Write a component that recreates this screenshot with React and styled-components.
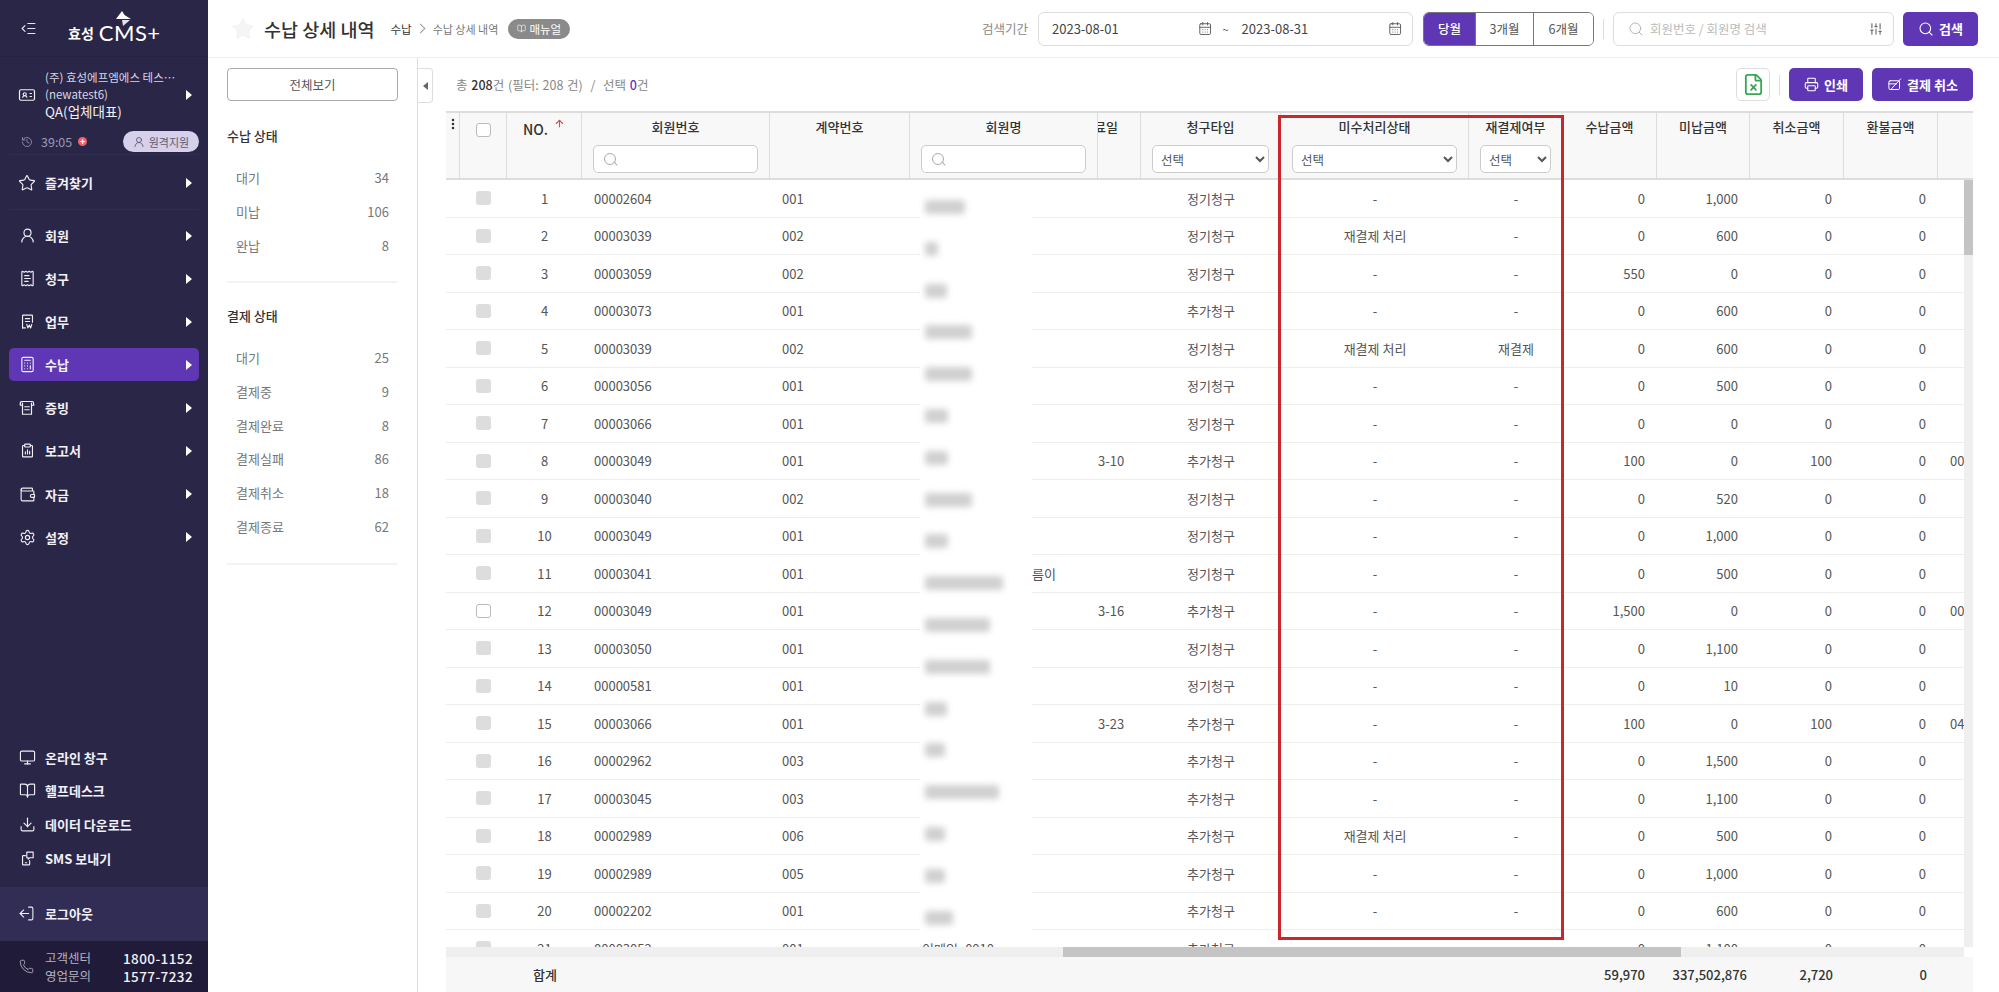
import styled, { createGlobalStyle } from "styled-components";
import {
    ArrowUp,
    BookOpen,
    Calculator,
    CalendarDays,
    Download,
    EllipsisVertical,
    FileX,
    History,
    IdCard,
    IndentDecrease,
    LogOut,
    Monitor,
    Phone,
    Printer,
    ReceiptText,
    Search,
    Settings,
    SlidersVertical,
    Star,
    UserRound,
    Wallet,
} from "lucide-react";

const COLUMNS = "14px 47px 75px 188px 140px 188px 43px 140px 188px 94px 94px 93px 94px 94px 1fr";

const LineIcon = ({ size = 17, children }) => (
    <svg
        width={size}
        height={size}
        viewBox="0 0 24 24"
        fill="none"
        stroke="currentColor"
        strokeWidth="1.6"
        strokeLinecap="round"
        strokeLinejoin="round"
    >
        {children}
    </svg>
);

const WorkIcon = () => (
    <LineIcon>
        <path d="M5 21V4a1 1 0 0 1 1-1h12a1 1 0 0 1 1 1v9" />
        <path d="M9 8h6M9 12h6" />
        <path d="M5 21h4M11 16l1.5 5 2-4 2 4 1.5-5" />
    </LineIcon>
);

const ProofIcon = () => (
    <LineIcon size={19}>
        <path d="M6 9H3c0-3 0-5 2-5h14c2 0 2 2 2 5h-3" />
        <path d="M6 6v15h12V6" />
        <path d="M9 11h6M9 15h6" />
    </LineIcon>
);

const ReportIcon = () => (
    <LineIcon>
        <path d="M8 5H6a1 1 0 0 0-1 1v14a1 1 0 0 0 1 1h12a1 1 0 0 0 1-1V6a1 1 0 0 0-1-1h-2" />
        <rect x="8" y="3" width="8" height="4" rx="1" />
        <path d="M9 17v-3M12 17v-6M15 17v-4" />
    </LineIcon>
);

const SmsIcon = () => (
    <LineIcon>
        <path d="M9 8H6a1 1 0 0 0-1 1v11a1 1 0 0 0 1 1h8a1 1 0 0 0 1-1v-5" />
        <path d="M11 3h9v8h-5l-2 2v-2h-2z" />
        <path d="M9 18h2" />
    </LineIcon>
);

const CancelIcon = () => (
    <LineIcon size={15}>
        <rect x="3" y="6" width="17" height="14" rx="2" />
        <path d="M22 3 6 20M3 11h12" />
    </LineIcon>
);

const MENU = [
    { label: "회원", Icon: () => <UserRound size={17} strokeWidth={1.6} /> },
    { label: "청구", Icon: () => <ReceiptText size={17} strokeWidth={1.6} /> },
    { label: "업무", Icon: WorkIcon },
    { label: "수납", Icon: () => <Calculator size={17} strokeWidth={1.6} />, active: true },
    { label: "증빙", Icon: ProofIcon },
    { label: "보고서", Icon: ReportIcon },
    { label: "자금", Icon: () => <Wallet size={17} strokeWidth={1.6} /> },
    { label: "설정", Icon: () => <Settings size={17} strokeWidth={1.6} /> },
];

const EXTRA_MENU = [
    { label: "온라인 창구", Icon: () => <Monitor size={17} strokeWidth={1.6} /> },
    { label: "헬프데스크", Icon: () => <BookOpen size={17} strokeWidth={1.6} /> },
    { label: "데이터 다운로드", Icon: () => <Download size={17} strokeWidth={1.6} /> },
    { label: "SMS 보내기", Icon: SmsIcon },
];

const PAY_STATUS = [["대기", 34], ["미납", 106], ["완납", 8]];
const SETTLE_STATUS = [["대기", 25], ["결제중", 9], ["결제완료", 8], ["결제실패", 86], ["결제취소", 18], ["결제종료", 62]];

// 회원번호, 계약번호, 이름, 일자, 청구타입, 미수, 재결제, 수납, 미납, 취소, 환불, 끝열
const ROWS = [
    ["00002604", "001", "", "", "정기청구", "-", "-", "0", "1,000", "0", "0", ""],
    ["00003039", "002", "", "", "정기청구", "재결제 처리", "-", "0", "600", "0", "0", ""],
    ["00003059", "002", "", "", "정기청구", "-", "-", "550", "0", "0", "0", ""],
    ["00003073", "001", "", "", "추가청구", "-", "-", "0", "600", "0", "0", ""],
    ["00003039", "002", "", "", "정기청구", "재결제 처리", "재결제", "0", "600", "0", "0", ""],
    ["00003056", "001", "", "", "정기청구", "-", "-", "0", "500", "0", "0", ""],
    ["00003066", "001", "", "", "정기청구", "-", "-", "0", "0", "0", "0", ""],
    ["00003049", "001", "", "3-10", "추가청구", "-", "-", "100", "0", "100", "0", "00"],
    ["00003040", "002", "", "", "정기청구", "-", "-", "0", "520", "0", "0", ""],
    ["00003049", "001", "", "", "정기청구", "-", "-", "0", "1,000", "0", "0", ""],
    ["00003041", "001", "름이", "", "정기청구", "-", "-", "0", "500", "0", "0", ""],
    ["00003049", "001", "", "3-16", "추가청구", "-", "-", "1,500", "0", "0", "0", "00"],
    ["00003050", "001", "", "", "정기청구", "-", "-", "0", "1,100", "0", "0", ""],
    ["00000581", "001", "", "", "정기청구", "-", "-", "0", "10", "0", "0", ""],
    ["00003066", "001", "", "3-23", "추가청구", "-", "-", "100", "0", "100", "0", "04"],
    ["00002962", "003", "", "", "추가청구", "-", "-", "0", "1,500", "0", "0", ""],
    ["00003045", "003", "", "", "추가청구", "-", "-", "0", "1,100", "0", "0", ""],
    ["00002989", "006", "", "", "추가청구", "재결제 처리", "-", "0", "500", "0", "0", ""],
    ["00002989", "005", "", "", "추가청구", "-", "-", "0", "1,000", "0", "0", ""],
    ["00002202", "001", "", "", "추가청구", "-", "-", "0", "600", "0", "0", ""],
    ["00003052", "001", "이메일_0010", "", "추가청구", "-", "-", "0", "1,100", "0", "0", ""],
];

const BLOBS = [40, 13, 22, 47, 47, 23, 23, 47, 23, 78, 65, 65, 22, 20, 74, 20, 20, 28];

const App = () => {
    return (
        <Page>
            <GlobalStyle />
            <Sidebar>
                <SideTop>
                    <IndentDecrease size={17} strokeWidth={1.6} />
                    <Logo>
                        <LogoMark viewBox="0 0 15 15">
                            <polygon points="6,0 0,8 15,8 8.5,4" fill="#fff" />
                            <polygon points="6,9 14,9 7,15" fill="#e4e2ee" />
                        </LogoMark>
                        <LogoKo>효성</LogoKo>
                        <LogoEn>CMS+</LogoEn>
                    </Logo>
                </SideTop>

                <Account>
                    <AccountMain>
                        <IdCard size={18} strokeWidth={1.6} />
                        <AccountText>
                            <AccountLine>(주) 효성에프엠에스 테스⋯</AccountLine>
                            <AccountLine>(newatest6)</AccountLine>
                            <AccountName>QA(업체대표)</AccountName>
                        </AccountText>
                        <Caret />
                    </AccountMain>
                    <Session>
                        <History size={12} strokeWidth={1.6} />
                        <Timer>39:05</Timer>
                        <PlusDot>+</PlusDot>
                        <RemotePill>
                            <UserRound size={12} strokeWidth={1.8} />
                            원격지원
                        </RemotePill>
                    </Session>
                </Account>

                <Favorites>
                    <MenuItem>
                        <Star size={18} strokeWidth={1.5} />
                        <MenuLabel>즐겨찾기</MenuLabel>
                        <Caret />
                    </MenuItem>
                </Favorites>

                <MenuList>
                    {MENU.map(({ label, Icon, active }) => (
                        <MenuItem key={label} $active={active}>
                            <IconSlot>
                                <Icon />
                            </IconSlot>
                            <MenuLabel>{label}</MenuLabel>
                            <Caret />
                        </MenuItem>
                    ))}
                </MenuList>

                <ExtraList>
                    {EXTRA_MENU.map(({ label, Icon }) => (
                        <ExtraItem key={label}>
                            <IconSlot>
                                <Icon />
                            </IconSlot>
                            <MenuLabel>{label}</MenuLabel>
                        </ExtraItem>
                    ))}
                </ExtraList>

                <Logout>
                    <FlipIcon>
                        <LogOut size={17} strokeWidth={1.5} />
                    </FlipIcon>
                    <MenuLabel>로그아웃</MenuLabel>
                </Logout>

                <Contact>
                    <Phone size={15} strokeWidth={1.4} />
                    <ContactNames>
                        <span>고객센터</span>
                        <span>영업문의</span>
                    </ContactNames>
                    <ContactNumbers>
                        <span>1800-1152</span>
                        <span>1577-7232</span>
                    </ContactNumbers>
                </Contact>
            </Sidebar>

            <Content>
                <TopBar>
                    <TitleGroup>
                        <Star size={24} color="#f3f3f3" fill="#f5f5f5" strokeWidth={1} />
                        <Title>수납 상세 내역</Title>
                        <Crumbs>
                            <CrumbStrong>수납</CrumbStrong>
                            <CrumbSep />
                            <span>수납 상세 내역</span>
                        </Crumbs>
                        <ManualPill>
                            <BookOpen size={9} strokeWidth={1.6} />
                            매뉴얼
                        </ManualPill>
                    </TitleGroup>

                    <SearchGroup>
                        <PeriodLabel>검색기간</PeriodLabel>
                        <DateField>
                            <DateValue>2023-08-01</DateValue>
                            <CalendarDays size={15} strokeWidth={1.5} />
                            <Tilde>~</Tilde>
                            <DateValue>2023-08-31</DateValue>
                            <CalendarDays size={15} strokeWidth={1.5} />
                        </DateField>
                        <Segments>
                            <Segment $on $w={52}>당월</Segment>
                            <Segment $w={58}>3개월</Segment>
                            <Segment $w={59}>6개월</Segment>
                        </Segments>
                        <VSep />
                        <SearchBox>
                            <Search size={16} strokeWidth={1.3} color="#aaaaaa" />
                            <SearchText>회원번호 / 회원명 검색</SearchText>
                            <SlidersVertical size={14} strokeWidth={1.7} color="#555555" />
                        </SearchBox>
                        <PurpleButton $w={75} $h={34}>
                            <Search size={16} strokeWidth={1.6} />
                            검색
                        </PurpleButton>
                    </SearchGroup>
                </TopBar>

                <Body>
                    <FilterPanel>
                        <ShowAll>전체보기</ShowAll>
                        <FilterGroup>
                            <FilterTitle>수납 상태</FilterTitle>
                            <FilterList>
                                {PAY_STATUS.map(([name, count]) => (
                                    <FilterRow key={name}>
                                        <span>{name}</span>
                                        <span>{count}</span>
                                    </FilterRow>
                                ))}
                            </FilterList>
                        </FilterGroup>
                        <FilterGroup>
                            <FilterTitle>결제 상태</FilterTitle>
                            <FilterList>
                                {SETTLE_STATUS.map(([name, count]) => (
                                    <FilterRow key={name}>
                                        <span>{name}</span>
                                        <span>{count}</span>
                                    </FilterRow>
                                ))}
                            </FilterList>
                        </FilterGroup>
                    </FilterPanel>

                    <Main>
                        <Toolbar>
                            <PanelToggle>
                                <SmallCaret />
                            </PanelToggle>
                            <Summary>
                                총 <b>208</b>건 (필터: 208 건) &nbsp;/&nbsp; 선택 <Accent>0</Accent>건
                            </Summary>
                            <ToolActions>
                                <ExcelButton>
                                    <FileX size={23} strokeWidth={1.9} color="#3aa655" />
                                </ExcelButton>
                                <VSep />
                                <PurpleButton $w={74} $h={33}>
                                    <Printer size={15} strokeWidth={1.7} />
                                    인쇄
                                </PurpleButton>
                                <PurpleButton $w={101} $h={33}>
                                    <CancelIcon />
                                    결제 취소
                                </PurpleButton>
                            </ToolActions>
                        </Toolbar>

                        <Table>
                            <HeadRow>
                                <HeadCell $first>
                                    <EllipsisVertical size={14} strokeWidth={2.4} color="#333" />
                                </HeadCell>
                                <HeadCell><Check $head /></HeadCell>
                                <HeadCell>
                                    <NoHead>
                                        NO.
                                        <ArrowUp size={11} strokeWidth={2.4} color="#e2474c" />
                                    </NoHead>
                                </HeadCell>
                                <HeadCell>
                                    회원번호
                                    <SearchInput />
                                </HeadCell>
                                <HeadCell>계약번호</HeadCell>
                                <HeadCell>
                                    회원명
                                    <SearchInput />
                                </HeadCell>
                                <HeadCell $clip>료일</HeadCell>
                                <HeadCell>
                                    청구타입
                                    <HeadSelect><option>선택</option></HeadSelect>
                                </HeadCell>
                                <HeadCell>
                                    미수처리상태
                                    <HeadSelect><option>선택</option></HeadSelect>
                                </HeadCell>
                                <HeadCell>
                                    재결제여부
                                    <HeadSelect><option>선택</option></HeadSelect>
                                </HeadCell>
                                <HeadCell>수납금액</HeadCell>
                                <HeadCell>미납금액</HeadCell>
                                <HeadCell>취소금액</HeadCell>
                                <HeadCell>환불금액</HeadCell>
                                <HeadCell $last />
                            </HeadRow>

                            <BodyWrap>
                                <ScrollArea>
                                    {ROWS.map((row, i) => (
                                        <Row key={i}>
                                            <Cell />
                                            <Cell $align="center"><Check $open={i === 11} /></Cell>
                                            <Cell $align="center">{i + 1}</Cell>
                                            <Cell>{row[0]}</Cell>
                                            <Cell>{row[1]}</Cell>
                                            <Cell $indent={row[2] === "름이" ? 110 : 0}>{row[2]}</Cell>
                                            <Cell $bare>{row[3]}</Cell>
                                            <Cell $align="center">{row[4]}</Cell>
                                            <Cell $align="center">{row[5]}</Cell>
                                            <Cell $align="center">{row[6]}</Cell>
                                            <Cell $align="right">{row[7]}</Cell>
                                            <Cell $align="right">{row[8]}</Cell>
                                            <Cell $align="right">{row[9]}</Cell>
                                            <Cell $align="right">{row[10]}</Cell>
                                            <Cell>{row[11]}</Cell>
                                        </Row>
                                    ))}
                                    <MaskPatch>
                                        {BLOBS.map((w, i) => (
                                            <Blob key={i} $w={w} />
                                        ))}
                                    </MaskPatch>
                                </ScrollArea>
                                <VTrack>
                                    <VThumb />
                                </VTrack>
                            </BodyWrap>

                            <HTrack>
                                <HThumb />
                            </HTrack>

                            <TotalRow>
                                <TotalLabel>합계</TotalLabel>
                                <TotalValue $x={1645}>59,970</TotalValue>
                                <TotalValue $x={1747}>337,502,876</TotalValue>
                                <TotalValue $x={1833}>2,720</TotalValue>
                                <TotalValue $x={1927}>0</TotalValue>
                            </TotalRow>
                        </Table>

                        <Highlight />
                    </Main>
                </Body>
            </Content>
        </Page>
    );
};

const GlobalStyle = createGlobalStyle`
    html, body {
        margin: 0;
        height: 100%;
        overflow: hidden;
        background: #fff;
    }
    body, button, input, select {
        font-family: "Noto Sans CJK KR", "Noto Sans", sans-serif;
    }
    * {
        box-sizing: border-box;
    }
`;

const Page = styled.div`
    display: flex;
    width: 1999px;
    height: 992px;
    overflow: hidden;
`;

const Sidebar = styled.aside`
    width: 208px;
    flex: none;
    height: 100%;
    display: flex;
    flex-direction: column;
    background: #2a2647;
    color: #f1f0f6;
`;

const SideTop = styled.div`
    height: 57px;
    padding-left: 20px;
    display: flex;
    align-items: center;
    flex: none;
    color: #e6e4ef;
    border-bottom: 1px solid #25213f;
`;

const Logo = styled.div`
    position: relative;
    margin-left: 31px;
    margin-top: 10px;
    display: flex;
    align-items: center;
    gap: 5px;
    color: #fff;
`;

const LogoMark = styled.svg`
    position: absolute;
    left: 48px;
    top: -12px;
    width: 15px;
    height: 15px;
`;

const LogoKo = styled.span`
    font-size: 14px;
    font-weight: 700;
`;

const LogoEn = styled.span`
    font-family: "Lato", sans-serif;
    font-size: 22px;
    line-height: 20px;
    letter-spacing: 0.5px;
`;

const Account = styled.div`
    height: 98px;
    margin: 0 9px;
    padding-top: 12px;
    border-bottom: 1px solid #312d50;
    flex: none;
`;

const AccountMain = styled.div`
    display: flex;
    align-items: center;
    padding-left: 9px;
    padding-right: 7px;
    gap: 9px;
`;

const AccountText = styled.div`
    flex: 1;
    min-width: 0;
    display: flex;
    flex-direction: column;
`;

const AccountLine = styled.span`
    font-size: 11.5px;
    line-height: 17px;
    white-space: nowrap;
    color: #d8d6e4;
`;

const AccountName = styled.span`
    font-size: 13.5px;
    line-height: 17px;
    white-space: nowrap;
    color: #f1f0f6;
`;

const Session = styled.div`
    display: flex;
    align-items: center;
    margin-top: 11px;
    padding-left: 12px;
    color: #9d9ab1;
`;

const Timer = styled.span`
    font-size: 12.5px;
    margin-left: 8px;
`;

const PlusDot = styled.span`
    width: 9px;
    height: 9px;
    margin-left: 6px;
    border-radius: 50%;
    background: #e8646a;
    color: #fff;
    font-size: 9px;
    line-height: 9px;
    text-align: center;
    font-weight: 700;
`;

const RemotePill = styled.span`
    margin-left: auto;
    width: 76px;
    height: 21px;
    border-radius: 11px;
    background: #d6d0ea;
    color: #5e5a73;
    font-size: 11px;
    display: flex;
    align-items: center;
    justify-content: center;
    gap: 4px;
`;

const Favorites = styled.div`
    height: 55px;
    margin: 0 9px;
    padding-top: 11px;
    border-bottom: 1px solid #312d50;
    flex: none;
`;

const MenuList = styled.nav`
    margin: 9px 9px 0;
    display: flex;
    flex-direction: column;
    gap: 10.1px;
`;

const MenuItem = styled.a`
    height: 33px;
    padding: 0 7px 0 9px;
    display: flex;
    align-items: center;
    gap: 9px;
    border-radius: 5px;
    background: ${(props) => (props.$active ? "#5f37b5" : "transparent")};
    color: #f1f0f6;
`;

const IconSlot = styled.span`
    width: 18px;
    flex: none;
    display: flex;
    justify-content: center;
`;

const MenuLabel = styled.span`
    flex: 1;
    font-size: 13px;
    font-weight: 700;
    white-space: nowrap;
`;

const Caret = styled.i`
    flex: none;
    width: 0;
    height: 0;
    border-left: 6px solid #fff;
    border-top: 5px solid transparent;
    border-bottom: 5px solid transparent;
`;

const ExtraList = styled.div`
    margin-top: auto;
    padding: 0 18px 12px;
    display: flex;
    flex-direction: column;
`;

const ExtraItem = styled.a`
    height: 33.7px;
    display: flex;
    align-items: center;
    gap: 9px;
    color: #f1f0f6;
`;

const Logout = styled.a`
    height: 54px;
    flex: none;
    padding: 0 0 2px 18px;
    display: flex;
    align-items: center;
    gap: 10px;
    background: #322d55;
    color: #f1f0f6;
`;

const FlipIcon = styled.span`
    display: flex;
    transform: scaleX(-1);
`;

const Contact = styled.div`
    height: 51px;
    flex: none;
    padding: 0 15px 0 19px;
    display: flex;
    align-items: center;
    background: #201b38;
    color: #b4b1c2;
`;

const ContactNames = styled.div`
    margin-left: 11px;
    display: flex;
    flex-direction: column;
    font-size: 12.5px;
    line-height: 18px;
`;

const ContactNumbers = styled.div`
    margin-left: auto;
    display: flex;
    flex-direction: column;
    color: #f1f0f6;
    font-size: 13.5px;
    line-height: 18px;
    font-weight: 500;
    letter-spacing: 0.4px;
`;

const Content = styled.div`
    flex: 1;
    min-width: 0;
    display: flex;
    flex-direction: column;
`;

const TopBar = styled.header`
    height: 58px;
    flex: none;
    padding: 0 21px 0 23px;
    display: flex;
    align-items: center;
    justify-content: space-between;
    border-bottom: 1px solid #eeeeee;
`;

const TitleGroup = styled.div`
    display: flex;
    align-items: center;
`;

const Title = styled.h1`
    margin: 0 0 0 9px;
    font-size: 18.5px;
    font-weight: 500;
    color: #333;
`;

const Crumbs = styled.div`
    margin-left: 16px;
    display: flex;
    align-items: center;
    font-size: 11px;
    color: #777;
`;

const CrumbStrong = styled.span`
    font-size: 11.5px;
    color: #333;
`;

const CrumbSep = styled.i`
    width: 7px;
    height: 7px;
    margin: 0 9px 0 5px;
    border-top: 1px solid #999;
    border-right: 1px solid #999;
    transform: rotate(45deg);
`;

const ManualPill = styled.span`
    margin-left: 10px;
    width: 62px;
    height: 20px;
    border-radius: 10px;
    background: #8a8a8a;
    color: #fff;
    font-size: 11.5px;
    display: flex;
    align-items: center;
    justify-content: center;
    gap: 3px;
`;

const SearchGroup = styled.div`
    display: flex;
    align-items: center;
`;

const PeriodLabel = styled.span`
    font-size: 12.5px;
    color: #888;
    margin-right: 10px;
`;

const DateField = styled.div`
    width: 375px;
    height: 34px;
    padding: 0 10px 0 13px;
    display: flex;
    align-items: center;
    border: 1px solid #dddddd;
    border-radius: 6px;
    color: #555;
`;

const DateValue = styled.span`
    width: 153px;
    font-size: 13px;
    color: #444;
`;

const Tilde = styled.span`
    margin: 0 13px 0 10px;
    font-size: 11px;
`;

const Segments = styled.div`
    margin-left: 10px;
    display: flex;
    height: 34px;
    border: 1px solid #777;
    border-radius: 6px;
    overflow: hidden;
`;

const Segment = styled.button`
    width: ${(props) => props.$w}px;
    padding: 0;
    border: none;
    border-right: 1px solid #777;
    background: ${(props) => (props.$on ? "#5f37b5" : "#fff")};
    color: ${(props) => (props.$on ? "#fff" : "#555")};
    font-size: 12.5px;
    font-weight: ${(props) => (props.$on ? 500 : 400)};
    &:last-child {
        border-right: none;
    }
`;

const VSep = styled.i`
    width: 1px;
    height: 20px;
    margin: 0 9px;
    background: #dddddd;
`;

const SearchBox = styled.div`
    width: 281px;
    height: 34px;
    margin-right: 9px;
    padding: 0 10px 0 14px;
    display: flex;
    align-items: center;
    border: 1px solid #dddddd;
    border-radius: 6px;
`;

const SearchText = styled.span`
    flex: 1;
    margin-left: 6px;
    font-size: 12.5px;
    color: #bbbbbb;
`;

const PurpleButton = styled.button`
    width: ${(props) => props.$w}px;
    height: ${(props) => props.$h}px;
    padding: 0;
    border: none;
    border-radius: 5px;
    background: #5f37b5;
    color: #fff;
    font-size: 13px;
    font-weight: 700;
    display: flex;
    align-items: center;
    justify-content: center;
    gap: 5px;
`;

const Body = styled.div`
    flex: 1;
    min-height: 0;
    display: flex;
`;

const FilterPanel = styled.section`
    width: 210px;
    flex: none;
    padding: 10px 19px 0;
    border-right: 1px solid #dddddd;
`;

const ShowAll = styled.button`
    width: 171px;
    height: 33px;
    padding: 0;
    border: 1px solid #aaaaaa;
    border-radius: 4px;
    background: #fff;
    color: #555;
    font-size: 12.5px;
`;

const FilterGroup = styled.div`
    padding: 25px 0 19px;
    border-bottom: 2px solid #f3f3f3;
    &:nth-of-type(2) {
        padding: 23px 0 20px;
    }
`;

const FilterTitle = styled.h3`
    margin: 0 0 15px;
    font-size: 13px;
    line-height: 20px;
    font-weight: 500;
    color: #333;
`;

const FilterList = styled.ul`
    margin: 0;
    padding: 0 9px;
    list-style: none;
`;

const FilterRow = styled.li`
    height: 33.7px;
    display: flex;
    align-items: center;
    justify-content: space-between;
    font-size: 13px;
    color: #777;
`;

const Main = styled.main`
    position: relative;
    flex: 1;
    min-width: 0;
    display: flex;
    flex-direction: column;
    padding-top: 10px;
`;

const Toolbar = styled.div`
    height: 35px;
    flex: none;
    margin-bottom: 8px;
    padding-right: 26px;
    display: flex;
    align-items: flex-start;
`;

const PanelToggle = styled.button`
    width: 15px;
    height: 35px;
    padding: 0;
    border: 1px solid #dddddd;
    border-left: none;
    border-radius: 0 4px 4px 0;
    background: #fff;
    display: flex;
    align-items: center;
    justify-content: center;
`;

const SmallCaret = styled.i`
    width: 0;
    height: 0;
    border-right: 5px solid #666;
    border-top: 4px solid transparent;
    border-bottom: 4px solid transparent;
`;

const Summary = styled.div`
    margin-left: 23px;
    line-height: 33px;
    font-size: 12.5px;
    color: #888;
    white-space: nowrap;
    word-spacing: 1px;
    b {
        font-weight: 500;
        color: #333;
    }
`;

const Accent = styled.b`
    && {
        color: #5f37b5;
    }
`;

const ToolActions = styled.div`
    margin-left: auto;
    display: flex;
    align-items: center;
    button:last-child {
        margin-left: 9px;
    }
`;

const ExcelButton = styled.button`
    width: 34px;
    height: 33px;
    padding: 0;
    border: 1px solid #dddddd;
    border-radius: 5px;
    background: #fff;
    display: flex;
    align-items: center;
    justify-content: center;
`;

const Table = styled.div`
    flex: 1;
    min-height: 0;
    margin: 0 26px 0 28px;
    display: flex;
    flex-direction: column;
`;

const HeadRow = styled.div`
    height: 69px;
    flex: none;
    display: grid;
    grid-template-columns: ${COLUMNS};
    border-top: 2px solid #dddddd;
    border-bottom: 2px solid #dddddd;
    background: #f8f8f8;
`;

const HeadCell = styled.div`
    min-width: 0;
    padding-top: 4px;
    padding-left: ${(props) => (props.$first || props.$clip ? 0 : 11)}px;
    padding-right: ${(props) => (props.$first ? 0 : props.$clip ? 22 : 11)}px;
    display: flex;
    flex-direction: column;
    align-items: ${(props) => (props.$clip ? "flex-start" : "center")};
    direction: ${(props) => (props.$clip ? "rtl" : "ltr")};
    gap: 8px;
    overflow: hidden;
    border-right: ${(props) => (props.$last ? "none" : "1px solid #dddddd")};
    font-size: 13px;
    line-height: 20px;
    font-weight: 500;
    color: #333;
    white-space: nowrap;
`;

const NoHead = styled.span`
    display: flex;
    gap: 6px;
    line-height: 24px;
    font-size: 14px;
    svg {
        margin-top: 1px;
    }
`;

const Check = styled.i`
    display: block;
    width: 15px;
    height: 14px;
    border-radius: 3px;
    margin-top: ${(props) => (props.$head ? "6px" : 0)};
    border: ${(props) => (props.$head || props.$open ? "1px solid #bbbbbb" : "none")};
    background: ${(props) => (props.$head || props.$open ? "#fff" : "#dddddd")};
`;

const SearchInput = styled.div`
    width: 100%;
    height: 28px;
    border: 1px solid #cccccc;
    border-radius: 5px;
    background: #fff;
    position: relative;
    &::before {
        content: "";
        position: absolute;
        left: 10px;
        top: 7px;
        width: 10px;
        height: 10px;
        border: 1.3px solid #aaaaaa;
        border-radius: 50%;
    }
    &::after {
        content: "";
        position: absolute;
        left: 19px;
        top: 17px;
        width: 5px;
        height: 1.3px;
        background: #aaaaaa;
        transform: rotate(50deg);
    }
`;

const HeadSelect = styled.select`
    width: 100%;
    height: 28px;
    padding: 0 4px;
    border: 1px solid #cccccc;
    border-radius: 5px;
    background: #fff;
    font-size: 12.5px;
    color: #555;
`;

const BodyWrap = styled.div`
    height: 767px;
    flex: none;
    display: flex;
`;

const ScrollArea = styled.div`
    position: relative;
    flex: 1;
    min-width: 0;
    overflow: hidden;
`;

const Row = styled.div`
    height: 37.5px;
    display: grid;
    grid-template-columns: ${COLUMNS};
    align-items: center;
    border-bottom: 1px solid #eeeeee;
`;

const Cell = styled.div`
    min-width: 0;
    padding-left: ${(props) => (props.$bare ? 0 : 12 + (props.$indent || 0))}px;
    padding-right: ${(props) => (props.$bare ? 0 : 12)}px;
    display: flex;
    justify-content: ${(props) =>
        props.$align === "center" ? "center" : props.$align === "right" ? "flex-end" : "flex-start"};
    font-size: 13px;
    color: #555;
    white-space: nowrap;
    overflow: hidden;
`;

const MaskPatch = styled.div`
    position: absolute;
    left: 474px;
    top: 0;
    width: 112px;
    height: 750px;
    padding: 20px 0 0 5px;
    display: flex;
    flex-direction: column;
    gap: 27.8px;
    background: #fff;
`;

const Blob = styled.i`
    display: block;
    flex: none;
    width: ${(props) => props.$w}px;
    height: 14px;
    border-radius: 3px;
    background: #d0d0d0;
    filter: blur(3px);
`;

const VTrack = styled.div`
    width: 9px;
    flex: none;
    background: #efefef;
`;

const VThumb = styled.div`
    height: 75px;
    background: #c4c4c4;
`;

const HTrack = styled.div`
    height: 10px;
    flex: none;
    margin-right: 9px;
    background: #efefef;
`;

const HThumb = styled.div`
    width: 618px;
    height: 100%;
    margin-left: 617px;
    background: #c4c4c4;
`;

const TotalRow = styled.div`
    flex: 1;
    position: relative;
    display: flex;
    align-items: center;
    background: #f7f7f7;
    font-size: 13px;
    font-weight: 500;
    color: #333;
`;

const TotalLabel = styled.span`
    margin-left: 87px;
`;

const TotalValue = styled.span`
    position: absolute;
    right: ${(props) => 1973 - props.$x}px;
`;

const Highlight = styled.div`
    position: absolute;
    left: 860px;
    top: 57px;
    width: 286px;
    height: 825px;
    border: 3.5px solid #c9272c;
    pointer-events: none;
`;

export default App;
